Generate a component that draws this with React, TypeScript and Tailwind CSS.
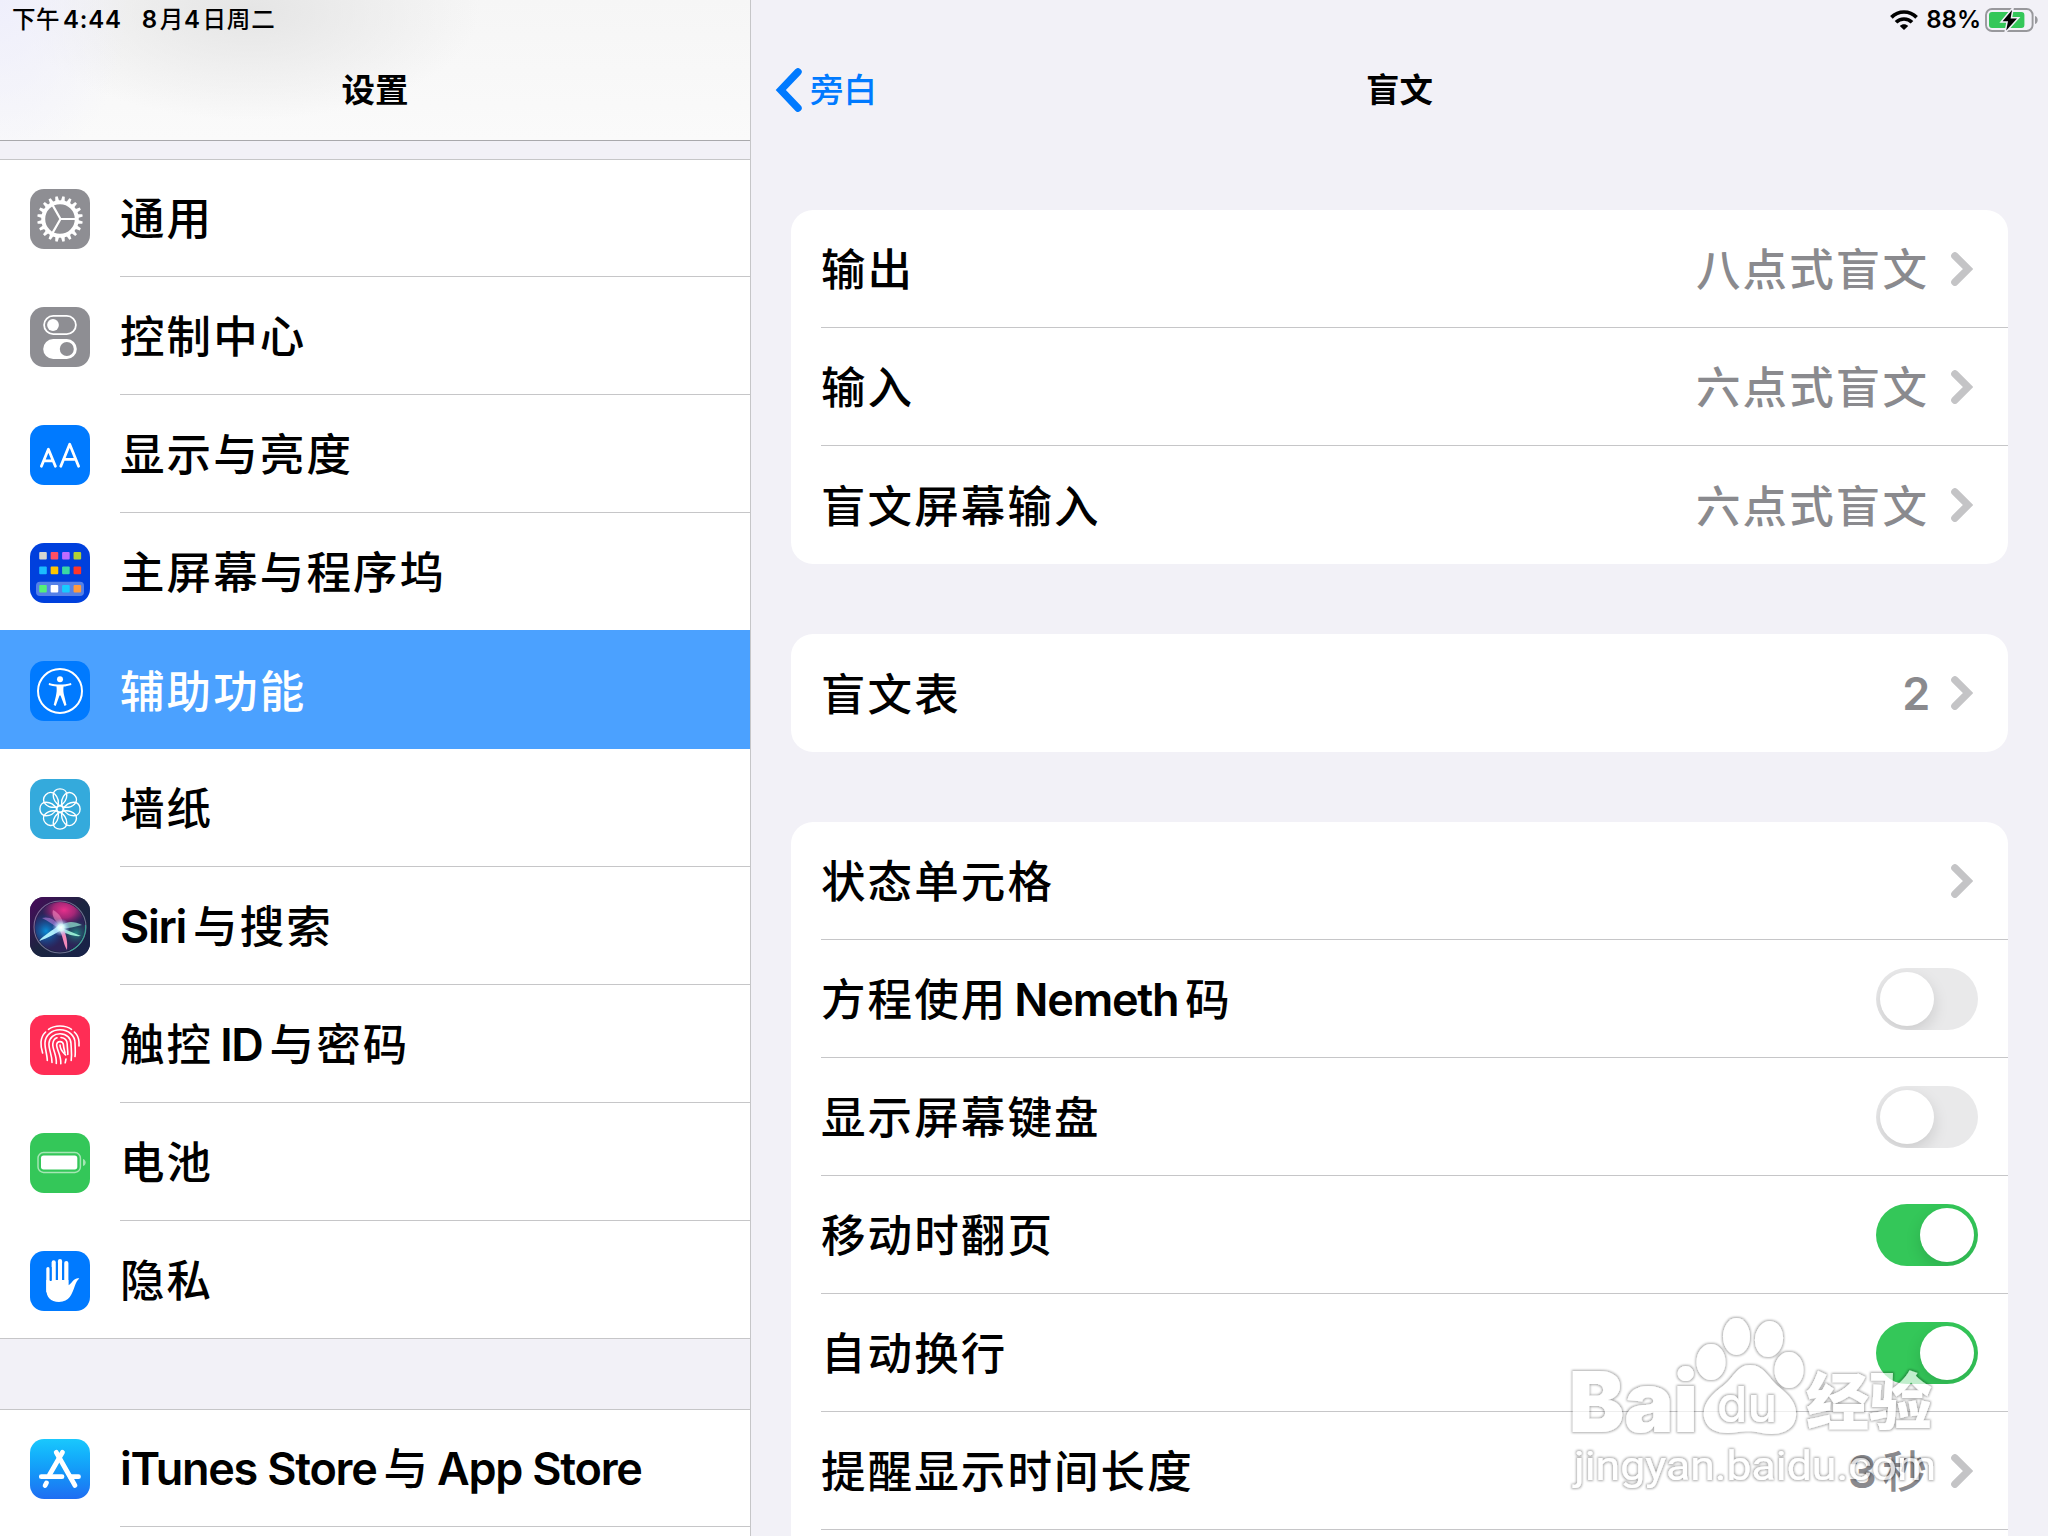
import React from "react";

const LATIN = /( ?[A-Za-z0-9%:.]+(?: [A-Za-z0-9%:.]+)* ?)/;

type MixedProps = { text: string; strut?: string; latin?: string; han?: string; gap?: string };

/* Splits mixed text so Latin runs, Chinese runs and the spaces between them each get their own metrics. */
function Mixed({ text, strut = "", latin = "", han = "", gap = "" }: MixedProps) {
  return (
    <span className={`block whitespace-pre font-['Inter'] leading-none ${strut}`}>
      {text.split(LATIN).filter(Boolean).map((part, i) =>
        LATIN.test(part) ? (
          <span key={i} className={latin}>
            {part.startsWith(" ") && <span className={gap}> </span>}
            {part.trim()}
            {part.endsWith(" ") && <span className={gap}> </span>}
          </span>
        ) : (
          <span key={i} className={`font-['Noto_Sans_CJK_SC',sans-serif] leading-none ${han}`}>{part}</span>
        )
      )}
    </span>
  );
}

function Body({ text }: { text: string }) {
  return (
    <Mixed
      text={text}
      strut="text-[45px]"
      latin="font-semibold tracking-[-1.25px]"
      gap="tracking-[-4.4px]"
      han="text-[44.5px] font-medium tracking-[2.1px]"
    />
  );
}

function Tile({ bg, children }: { bg: string; children: React.ReactNode }) {
  return (
    <svg viewBox="0 0 60 60" className={`size-[60px] shrink-0 rounded-[14px] ${bg}`} fill="none">
      {children}
    </svg>
  );
}

function GearIcon() {
  const teeth = Array.from({ length: 20 }, (_, i) => i * 18 + 9);
  return (
    <Tile bg="bg-[#8e8e93]">
      <circle cx="30" cy="30" r="16.8" stroke="#fff" strokeWidth="4" />
      {teeth.map((a) => (
        <path key={a} d="M27.9 13.5 L28.8 7.2 H31.2 L32.1 13.5Z" fill="#fff" transform={`rotate(${a} 30 30)`} />
      ))}
      <path d="M30.5 30 H46 M30.5 30 L22.3 15.6 M30.5 30 L22.3 44.4" stroke="#fff" strokeWidth="2.2" />
    </Tile>
  );
}

function ControlIcon() {
  return (
    <Tile bg="bg-[#8e8e93]">
      <rect x="14.1" y="8.9" width="31.8" height="18.2" rx="9.1" stroke="#fff" strokeWidth="1.8" />
      <circle cx="23" cy="18" r="5.9" fill="#fff" />
      <rect x="13.2" y="32" width="33.6" height="20" rx="10" fill="#fff" />
      <circle cx="36.8" cy="42" r="7" fill="#8e8e93" />
    </Tile>
  );
}

function DisplayIcon() {
  return (
    <Tile bg="bg-[#007aff]">
      <g stroke="#fff" strokeWidth="2.8" strokeLinecap="round" strokeLinejoin="round">
        <path d="M11.4 41.3 L18.4 24.2 L25.4 41.3 M13.8 35.8 H23" />
        <path d="M30.8 41.3 L39.7 19.2 L48.6 41.3 M33.7 34.4 H45.7" />
      </g>
    </Tile>
  );
}

function HomeIcon() {
  const rows: [number, string[]][] = [
    [9, ["#d5d5d0", "#ff4f64", "#bf6bff", "#b0d136"]],
    [23.6, ["#1bbcff", "#ffc500", "#3ad8a4", "#ff3529"]],
    [42, ["#55f078", "#ffffff", "#17ccff", "#ff9a3d"]],
  ];
  return (
    <Tile bg="bg-[#0040dd]">
      <rect x="6" y="38.8" width="48" height="14.2" rx="4" fill="#5581e8" />
      {rows.map(([y, colors]) =>
        colors.map((c, i) => <rect key={c} x={9.2 + i * 11.45} y={y} width="7.6" height="7.6" rx="1" fill={c} />)
      )}
    </Tile>
  );
}

function AccessIcon() {
  return (
    <Tile bg="bg-[#007aff]">
      <circle cx="30" cy="30" r="22" stroke="#fff" strokeWidth="2" />
      <circle cx="30" cy="18.3" r="3" fill="#fff" />
      <path d="M19 21.9 C26 23.9 34 23.9 41 21.9 L41.4 23.9 C38 24.8 35.5 25.3 33.6 25.6 C33 29 33.5 32.5 34.4 35.5 L36.5 44 L34.5 44.9 L30.5 34.5 H29.5 L25.7 44.9 L23.7 44 L25.8 35.5 C26.6 32 27 29 26.5 25.6 C24 25.3 21.5 24.7 18.7 23.9Z" fill="#fff" />
    </Tile>
  );
}

function WallpaperIcon() {
  return (
    <Tile bg="bg-[#34aadc]">
      <g stroke="#fff" strokeWidth="1.4">
        {[0, 45, 90, 135, 180, 225, 270, 315].map((a) => (
          <path key={a} transform={`rotate(${a} 30 30)`} d="M30 26.8 C25.2 24 23.2 19.5 23.2 16 C23.2 12.3 26.2 9.9 30 9.9 C33.8 9.9 36.8 12.3 36.8 16 C36.8 19.5 34.8 24 30 26.8Z" />
        ))}
        <circle cx="30" cy="30" r="3.2" />
      </g>
    </Tile>
  );
}

function SiriIcon() {
  return (
    <Tile bg="bg-[#1b2140]">
      <defs>
        <linearGradient id="sBg" x1="0" y1="0" x2="1" y2="1">
          <stop offset="0" stopColor="#4a0a5c" />
          <stop offset=".5" stopColor="#1b2540" />
          <stop offset="1" stopColor="#18224a" />
        </linearGradient>
        <radialGradient id="sPink" cx=".5" cy=".5" r=".5">
          <stop offset="0" stopColor="#e8308c" />
          <stop offset=".5" stopColor="#b8287c" stopOpacity=".85" />
          <stop offset="1" stopColor="#8a1e70" stopOpacity="0" />
        </radialGradient>
        <radialGradient id="sBlue" cx=".5" cy=".5" r=".5">
          <stop offset="0" stopColor="#0a8fd8" />
          <stop offset="1" stopColor="#0d4c9c" stopOpacity="0" />
        </radialGradient>
        <radialGradient id="sGreen" cx=".5" cy=".5" r=".5">
          <stop offset="0" stopColor="#1fc8a0" />
          <stop offset="1" stopColor="#0b6b5e" stopOpacity="0" />
        </radialGradient>
        <radialGradient id="sCore" cx=".5" cy=".5" r=".5">
          <stop offset="0" stopColor="#fff" />
          <stop offset=".35" stopColor="#d9ffff" stopOpacity=".9" />
          <stop offset="1" stopColor="#8af" stopOpacity="0" />
        </radialGradient>
        <clipPath id="sClip"><circle cx="30" cy="30" r="25" /></clipPath>
        <filter id="sSoft"><feGaussianBlur stdDeviation=".5" /></filter>
      </defs>
      <rect width="60" height="60" fill="url(#sBg)" />
      <g clipPath="url(#sClip)">
        <circle cx="30" cy="30" r="25" fill="#2c2358" />
        <ellipse cx="34" cy="13" rx="22" ry="16" fill="url(#sPink)" />
        <ellipse cx="16" cy="34" rx="18" ry="18" fill="url(#sBlue)" />
        <ellipse cx="46" cy="36" rx="14" ry="13" fill="url(#sGreen)" opacity=".6" />
        <g filter="url(#sSoft)">
          <path d="M30 29 C25 22 18 19 12 21 C18 24 25 29 30 32Z" fill="#d58cf0" opacity=".5" />
          <path d="M31 30 C26 25 21 19 23 13 C29 16 34 23 33 30Z" fill="#ff9ccc" opacity=".5" />
          <path d="M31 29 C38 23 45 25 52 28 C45 30 38 31 31 32Z" fill="#9ef5dc" opacity=".65" />
          <path d="M29 28 C22 34 14 38 9 44 C18 41 26 36 33 32Z" fill="#b4f6ff" opacity=".95" />
          <path d="M30 30 C36 33 44 36 51 39 C44 40 34 36 29 33Z" fill="#a8ffe0" opacity=".85" />
          <path d="M29 32 C33 38 33 47 37 53 C38 45 36 37 33 31Z" fill="#ff8fc0" opacity=".95" />
        </g>
        <circle cx="31" cy="30.5" r="9" fill="url(#sCore)" />
      </g>
      <circle cx="30" cy="30" r="26" stroke="#a9a4c4" strokeOpacity=".6" strokeWidth="1.1" />
      <path d="M55.5 28 A26 26 0 0 1 40 54" stroke="#2ec09c" strokeOpacity=".7" strokeWidth="1.2" />
    </Tile>
  );
}

function TouchIcon() {
  return (
    <Tile bg="bg-[#ff2d55]">
      <g stroke="#fff" strokeWidth="1.6" strokeLinecap="round">
        <path d="M18.5 14.3 C24.5 9.8 35.5 9.8 41.5 14.3" />
        <path d="M12.6 38 C11.3 34 10.8 30 11 27 C11.3 23 13 19.5 15.6 17" />
        <path d="M44.4 17 C47 19.5 48.8 23 49 27 V31" />
        <path d="M17.3 45.5 C17.3 40 14.6 33 15 27.5 C15.5 20 22 14.8 30 14.8 C38.5 14.8 45 20.5 45 28 C45.2 33 45.6 38 45 41.5" />
        <path d="M22 47.5 C22.2 40 18.4 34 19 28.2 C19.5 22.4 24 18.8 30 18.8 C36.5 18.8 41 23 41 28.6 C41.2 34 42 38 41.2 45.5" />
        <path d="M26.3 48.5 C27 40 22.2 34 22.8 28.8 C23.2 25.6 24.6 23.5 27 22.8 M31 22.5 C35 22.9 37.1 25.5 37.2 29 C37.2 33 38 36 37.8 39.5" />
        <path d="M30.8 48.8 C31.4 40 26.2 34 26.7 29.5 C27.2 25.6 32.9 25.7 33.4 29.7 C33.6 33 34.6 36 35 38" />
        <path d="M30 30 C30 35 33.6 38 35.6 40 M36 44 L35.2 47.8" />
      </g>
    </Tile>
  );
}

function BatteryIcon() {
  return (
    <Tile bg="bg-[#34c759]">
      <rect x="8" y="19.6" width="42.4" height="19.8" rx="5.5" stroke="#a6e6b5" strokeWidth="1.5" />
      <rect x="11" y="22.6" width="36.3" height="13.8" rx="2.6" fill="#fff" />
      <path d="M53 26 C56.6 27 56.6 32 53 33Z" fill="#a6e6b5" />
    </Tile>
  );
}

function HandIcon() {
  return (
    <Tile bg="bg-[#007aff]">
      <g fill="#fff">
        <rect x="16.3" y="16" width="3.4" height="26" rx="1.7" />
        <rect x="21.6" y="9.3" width="4.2" height="28" rx="2.1" />
        <rect x="27.9" y="8" width="4.2" height="28" rx="2.1" />
        <rect x="34.2" y="10" width="4.2" height="28" rx="2.1" />
        <path d="M16.3 29 H38.4 V34.2 C39.6 34 41 32.2 43 29.8 C45 27.6 47.3 26.8 49.3 27.5 C47 29.4 46 32 44.8 35 C42 43 39.5 50.8 29 51 C20.5 51 16.3 46 16.3 38Z" />
      </g>
      <path d="M20.7 16 V30 M26.9 12 V29 M33.1 12 V29" stroke="#007aff" strokeWidth="1.9" />
    </Tile>
  );
}

function StoreIcon() {
  return (
    <Tile bg="bg-linear-to-b from-[#1ac8fd] to-[#1f6df2]">
      <g stroke="#fff" strokeWidth="4.8" strokeLinecap="round">
        <path d="M32.5 13.3 L19.4 36" />
        <path d="M26.2 13.3 L45 46.5" />
        <path d="M11.3 37.7 H32 M40.5 37.7 H48.5" />
        <path d="M16.4 44 L15.1 46.5" />
      </g>
    </Tile>
  );
}

const items = [
  { text: "通用", icon: <GearIcon /> },
  { text: "控制中心", icon: <ControlIcon /> },
  { text: "显示与亮度", icon: <DisplayIcon /> },
  { text: "主屏幕与程序坞", icon: <HomeIcon /> },
  { text: "辅助功能", icon: <AccessIcon />, selected: true },
  { text: "墙纸", icon: <WallpaperIcon /> },
  { text: "Siri 与搜索", icon: <SiriIcon /> },
  { text: "触控 ID 与密码", icon: <TouchIcon /> },
  { text: "电池", icon: <BatteryIcon /> },
  { text: "隐私", icon: <HandIcon />, last: true },
];

function SideRow({ text, icon, selected, last }: { text: string; icon: React.ReactNode; selected?: boolean; last?: boolean }) {
  const frame = selected
    ? "relative -mt-px h-[119px] bg-[#4ba1ff] pt-px text-white"
    : last
      ? "h-[118px] border-b border-[#c6c6c8]"
      : "h-[118px] first:-mt-px";
  return (
    <div className={`flex shrink-0 pl-[30px] ${frame}`}>
      <div className="pt-[30px]">{icon}</div>
      <div className={`ml-[30px] flex flex-1 items-center ${selected || last ? "" : "border-b border-[#c6c6c8]"}`}>
        <Body text={text} />
      </div>
    </div>
  );
}

function Chevron() {
  return (
    <svg viewBox="0 0 22 34" className="ml-[22px] h-[34px] w-[22px]" fill="none">
      <path d="M3.9 3.9 L17 17 L3.9 30.1" stroke="#c4c4c6" strokeWidth="7.4" strokeLinecap="round" strokeLinejoin="miter" />
    </svg>
  );
}

function Toggle({ on }: { on: boolean }) {
  return (
    <div className={`flex h-[62px] w-[102px] items-center overflow-hidden rounded-full px-1 ${on ? "justify-end bg-[#34c759]" : "bg-[#e9e9ea]"}`}>
      <div className="size-[54px] rounded-full bg-white shadow-[0_6px_16px_rgba(0,0,0,0.13)]" />
    </div>
  );
}

type Row = { text: string; value?: string; on?: boolean };

const groups: Row[][] = [
  [
    { text: "输出", value: "八点式盲文" },
    { text: "输入", value: "六点式盲文" },
    { text: "盲文屏幕输入", value: "六点式盲文" },
  ],
  [{ text: "盲文表", value: "2" }],
  [
    { text: "状态单元格", value: "" },
    { text: "方程使用 Nemeth 码", on: false },
    { text: "显示屏幕键盘", on: false },
    { text: "移动时翻页", on: true },
    { text: "自动换行", on: true },
    { text: "提醒显示时间长度", value: "3 秒" },
    { text: "", value: undefined },
  ],
];

function Card({ rows }: { rows: Row[] }) {
  return (
    <div className="mx-10 mb-[70px] shrink-0 rounded-[22px] bg-white pl-[30px]">
      {rows.map((r, i) => (
        <div key={i} className={`flex h-[118px] items-center justify-between ${i < rows.length - 1 ? "border-b border-[#c6c6c8]" : ""} ${r.on === undefined ? "pr-[35px]" : "pr-[30px]"}`}>
          <Body text={r.text} />
          {r.on !== undefined && <Toggle on={r.on} />}
          {r.value !== undefined && (
            <div className="flex items-center text-[#8a8a8e]">
              <Body text={r.value} />
              <Chevron />
            </div>
          )}
        </div>
      ))}
    </div>
  );
}

function Wifi() {
  return (
    <svg viewBox="0 0 28 20" className="h-5 w-7" fill="none">
      <g stroke="#000" strokeWidth="3.7">
        <path d="M1.4 7.4 C8.5 0.2 19.5 0.2 26.6 7.4" />
        <path d="M6 12.3 C10.3 7.9 17.7 7.9 22 12.3" />
      </g>
      <path d="M9.8 16 C12.2 13.7 15.8 13.7 18.2 16 L14 20Z" fill="#000" />
    </svg>
  );
}

function StatusBattery() {
  return (
    <svg viewBox="0 0 54 24" className="h-6 w-[54px]" fill="none">
      <rect x="1" y="1" width="46.6" height="22" rx="6" stroke="#98989c" strokeWidth="1.9" />
      <path d="M50 8 C53.6 9 53.6 15 50 16Z" fill="#98989c" />
      <rect x="4" y="4" width="35.4" height="16" rx="3" fill="#34c759" />
      <path d="M27 2 L17.6 13.2 H23 L21.2 22.5 L32 10.6 H25.6Z" fill="#000" stroke="#f2f1f7" strokeWidth="3" paintOrder="stroke" />
    </svg>
  );
}

function WatermarkShapes() {
  return (
    <>
      <text x="9" y="122" fontFamily="Inter" fontWeight="900" fontSize="84" textLength="129" lengthAdjust="spacingAndGlyphs">Bai</text>
      <ellipse cx="151" cy="52" rx="14.5" ry="18" />
      <ellipse cx="176.5" cy="26.5" rx="13.5" ry="18.5" />
      <ellipse cx="209" cy="29" rx="14" ry="18" transform="rotate(8 209 29)" />
      <ellipse cx="229" cy="60" rx="14.5" ry="18" />
      <path d="M190 55 C204 55 209 69 219 77 C230 86 237 94 236 106 C234 123 216 126 202 123 C193 121 187 121 178 122 C163 125 147 122 144 107 C142 94 152 84 163 76 C173 69 177 55 190 55Z" />
    </>
  );
}

function Watermark() {
  return (
    <svg viewBox="0 0 400 190" className="absolute left-[1560px] top-[1310px] h-[190px] w-[400px] overflow-visible">
      <defs>
        <filter id="wmShadow" x="-5%" y="-5%" width="110%" height="110%">
          <feMorphology in="SourceAlpha" operator="dilate" radius="1" result="wide" />
          <feGaussianBlur in="wide" stdDeviation="1" result="soft" />
          <feComposite in="soft" in2="SourceAlpha" operator="out" result="ring" />
          <feFlood floodColor="#000" floodOpacity=".32" />
          <feComposite in2="ring" operator="in" result="edge" />
          <feComponentTransfer in="SourceGraphic" result="body"><feFuncA type="linear" slope=".7" /></feComponentTransfer>
          <feMerge><feMergeNode in="body" /><feMergeNode in="edge" /></feMerge>
        </filter>
      </defs>
      <g fill="#fff">
        <g filter="url(#wmShadow)"><WatermarkShapes /></g>
        <g filter="url(#wmShadow)">
          <text x="157" y="112" fontFamily="Inter" fontWeight="500" fontSize="50" textLength="60" lengthAdjust="spacingAndGlyphs">du</text>
          <text x="246" y="115" fontFamily="Noto Sans CJK SC" fontWeight="900" fontSize="62" textLength="126" lengthAdjust="spacingAndGlyphs">经验</text>
          <text x="14" y="170" fontFamily="Roboto" fontSize="40" textLength="362" lengthAdjust="spacingAndGlyphs">jingyan.baidu.com</text>
        </g>
      </g>
    </svg>
  );
}

export default function App() {
  return (
    <div className="relative flex h-[1536px] w-[2048px] overflow-hidden bg-[#f2f1f7] text-black">
      <aside className="flex h-full w-[751px] shrink-0 flex-col overflow-hidden border-r border-[#c6c6c8]">
        <header className="h-[141px] shrink-0 border-b border-[#a9a9ac] bg-[radial-gradient(ellipse_130px_180px_at_0px_0px,#efeffc_0%,rgba(239,239,252,0)_100%),radial-gradient(ellipse_230px_110px_at_250px_10px,#e5e5e5_0%,rgba(229,229,229,0)_100%),linear-gradient(#f6f6f6,#fafafa)]">
          <div className="flex h-10 items-center gap-[20px] pb-px pl-3">
            <Mixed text="下午 4:44" strut="text-[24px]" latin="font-semibold tracking-[0.8px]" gap="tracking-[-3px]" han="text-[23.5px] font-medium tracking-[0.5px]" />
            <Mixed text="8月4日周二" strut="text-[24px]" latin="font-semibold tracking-[2.4px]" han="text-[23.5px] font-medium tracking-[0.9px]" />
          </div>
          <div className="flex h-[96px] items-center justify-center">
            <span className="font-['Noto_Sans_CJK_SC',sans-serif] text-[33.5px] font-bold leading-none">设置</span>
          </div>
        </header>
        <div className="h-[18px] shrink-0" />
        <nav className="flex shrink-0 flex-col border-t border-[#c6c6c8] bg-white">
          {items.map((it) => <SideRow key={it.text} {...it} />)}
        </nav>
        <div className="h-[70px] shrink-0" />
        <nav className="flex shrink-0 flex-col border-t border-[#c6c6c8] bg-white">
          <SideRow text="iTunes Store 与 App Store" icon={<StoreIcon />} />
          <div className="h-5" />
        </nav>
      </aside>

      <main className="flex h-full flex-1 flex-col overflow-hidden">
        <div className="flex h-10 shrink-0 items-center justify-end pr-[9px]">
          <Wifi />
          <span className="ml-[8px] mr-[4px] font-['Inter'] text-[24px] font-semibold leading-none">88%</span>
          <StatusBattery />
        </div>
        <div className="grid h-[100px] shrink-0 grid-cols-3 items-center">
          <div className="flex items-center pl-6 text-[#007aff]">
            <svg viewBox="0 0 28 44" className="h-[44px] w-[28px]" fill="none">
              <path d="M23 3.9 L5.8 22 L23 40.1" stroke="currentColor" strokeWidth="7.4" strokeLinecap="round" />
            </svg>
            <span className="mb-[4px] ml-[7px] font-['Noto_Sans_CJK_SC',sans-serif] text-[33.5px] font-medium leading-none">旁白</span>
          </div>
          <span className="mb-[4px] text-center font-['Noto_Sans_CJK_SC',sans-serif] text-[33.5px] font-bold leading-none">盲文</span>
        </div>
        <div className="h-[70px] shrink-0" />
        {groups.map((g, i) => <Card key={i} rows={g} />)}
      </main>
      <Watermark />
    </div>
  );
}
